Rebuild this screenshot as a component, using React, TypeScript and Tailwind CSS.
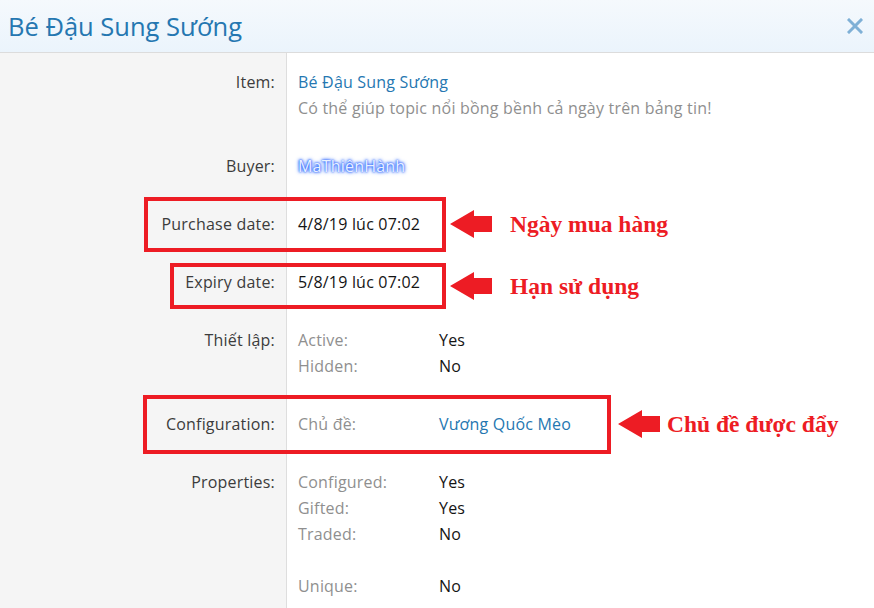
import React from 'react';

type Sub = [string, string, boolean?];

function Arrow() {
  return (
    <svg width="42" height="28" viewBox="0 0 42 28" className="block shrink-0">
      <path d="M0 14 L24 0 L24 6 L42 6 L42 22 L24 22 L24 28 Z" fill="#ed1c24" />
    </svg>
  );
}

function SubList({ items }: { items: (Sub | null)[] }) {
  return (
    <div className="grid grid-cols-[141px_1fr]">
      {items.map((it, i) =>
        it ? (
          <React.Fragment key={i}>
            <div className="text-[#8f8f8f]">{it[0]}</div>
            <div className={it[2] ? 'text-[#2577b1]' : 'text-[#141414]'}>{it[1]}</div>
          </React.Fragment>
        ) : (
          <div key={i} className="col-span-2 h-[26px]" />
        ),
      )}
    </div>
  );
}

function Row({ label, children }: { label: string; children: React.ReactNode }) {
  return (
    <>
      <div className="bg-[#f5f5f5] border-r border-[#dedede] py-4 pr-[11px] text-right text-[#3c3c3c]">
        {label}
      </div>
      <div className="py-4 pl-[11px] text-[#141414]">{children}</div>
    </>
  );
}

export default function App() {
  return (
    <div
      className="relative w-[874px] h-[608px] overflow-hidden bg-white text-[16px] tracking-[0.2px] leading-[26px]"
      style={{ fontFamily: '"Open Sans", "Noto Sans", sans-serif' }}
    >
      <div className="h-[53px] flex items-center justify-between pl-2 pr-[11px] border-b border-[#dcdcdc] bg-gradient-to-b from-[#f5f9fd] to-[#ebf4fc]">
        <h1 className="text-[25.5px] tracking-normal text-[#2577b1]">Bé Đậu Sung Sướng</h1>
        <svg width="16" height="16" viewBox="0 0 16 16" className="block">
          <path d="M2 2 L14 14 M14 2 L2 14" stroke="#7fb0d6" strokeWidth="3" strokeLinecap="square" />
        </svg>
      </div>

      <div className="grid grid-cols-[287px_1fr]">
        <Row label="Item:">
          <div className="text-[#2577b1]">Bé Đậu Sung Sướng</div>
          <div className="text-[#8f8f8f]">Có thể giúp topic nổi bồng bềnh cả ngày trên bảng tin!</div>
        </Row>
        <Row label="Buyer:">
          <span className="text-[#e8f0ff] [text-shadow:0_0_3px_#2a64ff,0_0_4px_#2a64ff,0_0_2px_#2a64ff]">
            MaThiênHành
          </span>
        </Row>
        <Row label="Purchase date:">4/8/19 lúc 07:02</Row>
        <Row label="Expiry date:">5/8/19 lúc 07:02</Row>
        <Row label="Thiết lập:">
          <SubList items={[['Active:', 'Yes'], ['Hidden:', 'No']]} />
        </Row>
        <Row label="Configuration:">
          <SubList items={[['Chủ đề:', 'Vương Quốc Mèo', true]]} />
        </Row>
        <Row label="Properties:">
          <SubList
            items={[
              ['Configured:', 'Yes'],
              ['Gifted:', 'Yes'],
              ['Traded:', 'No'],
              null,
              ['Unique:', 'No'],
            ]}
          />
        </Row>
      </div>

      {/* annotations */}
      <div className="absolute left-[144px] top-[197px] w-[302px] h-[55px] border-4 border-[#ed1c24]" />
      <div className="absolute left-[170px] top-[263px] w-[276px] h-[46px] border-4 border-[#ed1c24]" />
      <div className="absolute left-[143px] top-[395px] w-[468px] h-[59px] border-4 border-[#ed1c24]" />

      <div
        className="absolute left-[450px] top-[210px] flex items-center gap-[18px] text-[#ed1c24] text-[23.5px] tracking-normal font-bold"
        style={{ fontFamily: '"Liberation Serif", serif' }}
      >
        <Arrow />
        <span>Ngày mua hàng</span>
      </div>
      <div
        className="absolute left-[450px] top-[272px] flex items-center gap-[18px] text-[#ed1c24] text-[23.5px] tracking-normal font-bold"
        style={{ fontFamily: '"Liberation Serif", serif' }}
      >
        <Arrow />
        <span>Hạn sử dụng</span>
      </div>
      <div
        className="absolute left-[618px] top-[410px] flex items-center gap-[7px] text-[#ed1c24] text-[23.5px] tracking-normal font-bold"
        style={{ fontFamily: '"Liberation Serif", serif' }}
      >
        <Arrow />
        <span>Chủ đề được đẩy</span>
      </div>
    </div>
  );
}
